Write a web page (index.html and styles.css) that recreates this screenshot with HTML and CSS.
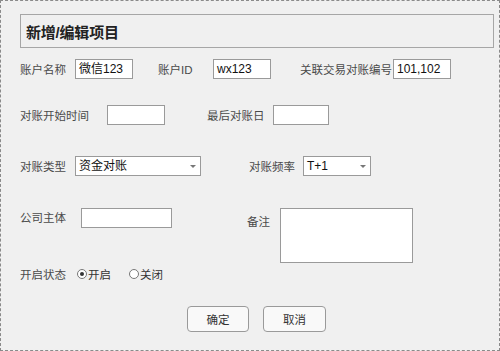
FILE: index.html
```html
<!DOCTYPE html>
<html lang="zh">
<head>
<meta charset="utf-8">
<title>新增/编辑项目</title>
<link rel="stylesheet" href="styles.css">
</head>
<body>
<div class="page">
  <div class="title-box"><h1 class="title">新增/编辑项目</h1></div>

  <div class="row row1">
    <span class="label w55">账户名称</span>
    <div class="input w58">微信123</div>
    <span class="label w55 ml25">账户ID</span>
    <div class="input w58">wx123</div>
    <span class="label w93 ml29">关联交易对账编号</span>
    <div class="input w58">101,102</div>
  </div>

  <div class="row row2">
    <span class="label w87">对账开始时间</span>
    <div class="input w58"></div>
    <span class="label w66 ml42">最后对账日</span>
    <div class="input w56"></div>
  </div>

  <div class="row row3">
    <span class="label w55">对账类型</span>
    <div class="select w126"><span>资金对账</span><i class="caret"></i></div>
    <span class="label w54 ml48">对账频率</span>
    <div class="select w68"><span>T+1</span><i class="caret"></i></div>
  </div>

  <div class="row row4">
    <span class="label w61 lbl-mid">公司主体</span>
    <div class="input w91"></div>
    <span class="label w33 ml75 lbl-top">备注</span>
    <div class="textarea"></div>
  </div>

  <div class="row row5">
    <span class="label w56">开启状态</span>
    <span class="radio checked"></span><span class="opt">开启</span>
    <span class="radio ml-radio2"></span><span class="opt">关闭</span>
  </div>

  <div class="actions">
    <button class="btn btn-ok">确定</button>
    <button class="btn btn-cancel">取消</button>
  </div>
</div>
</body>
</html>
```

FILE: styles.css
```css
* { box-sizing: border-box; }
html, body { margin: 0; padding: 0; }
body {
  width: 500px;
  height: 351px;
  background: #f0f0f0;
  font-family: "Liberation Sans", "Noto Sans CJK SC", sans-serif;
  font-size: 12px;
  color: #333;
}
.page {
  width: 500px;
  height: 351px;
  border: 1px dashed #8a8a8a;
  padding: 13px 0 0 19px;
}
.title-box {
  width: 474px;
  height: 34px;
  border: 1px solid #a6a6a6;
  background: #f0f0f0;
  display: flex;
  align-items: center;
  padding-left: 5px;
}
.title {
  margin: 0;
  font-size: 15px;
  font-weight: bold;
  color: #222;
  letter-spacing: -0.2px;
}
.row { display: flex; align-items: center; }
.row1 { margin-top: 11px; height: 20px; }
.row2 { margin-top: 26px; height: 20px; }
.row3 { margin-top: 31px; height: 20px; }
.row4 { margin-top: 32px; align-items: flex-start; }
.row5 { margin-top: 3px; height: 16px; }

.label { color: #4a4a4a; font-size: 11.5px; white-space: nowrap; }
.w33 { width: 33px; } .w54 { width: 54px; } .w55 { width: 55px; }
.w56 { width: 56px; } .w58 { width: 58px; } .w61 { width: 61px; }
.w66 { width: 66px; } .w68 { width: 68px; } .w87 { width: 87px; }
.w91 { width: 91px; } .w93 { width: 93px; } .w126 { width: 126px; }
.ml25 { margin-left: 25px; } .ml29 { margin-left: 29px; }
.ml42 { margin-left: 42px; } .ml48 { margin-left: 48px; }
.ml75 { margin-left: 75px; }
.lbl-mid { line-height: 20px; }
.lbl-top { line-height: 16px; margin-top: 6px; }

.input {
  height: 20px;
  border: 1px solid #9a9a9a;
  background: #fff;
  color: #111;
  font-size: 12px;
  line-height: 18px;
  padding-left: 3px;
}
.select {
  height: 20px;
  border: 1px solid #9a9a9a;
  background: #fff;
  color: #111;
  font-size: 12px;
  line-height: 18px;
  padding-left: 3px;
  display: flex;
  align-items: center;
  justify-content: space-between;
  padding-right: 4px;
}
.caret {
  width: 0; height: 0;
  border-left: 3px solid transparent;
  border-right: 3px solid transparent;
  border-top: 3px solid #777;
}
.textarea {
  width: 133px;
  height: 55px;
  border: 1px solid #9a9a9a;
  background: #fff;
}
.radio {
  width: 10px; height: 10px;
  border: 1px solid #777;
  border-radius: 50%;
  background: #fff;
  display: inline-flex;
  align-items: center;
  justify-content: center;
  margin-left: 1px;
}
.radio.checked::after {
  content: "";
  width: 4px; height: 4px;
  border-radius: 50%;
  background: #333;
}
.opt { margin-left: 1px; color: #333; font-size: 11.5px; }
.ml-radio2 { margin-left: 18px; }

.actions {
  margin-top: 24px;
  padding-left: 167px;
  display: flex;
  gap: 14px;
}
.btn {
  height: 26px;
  border: 1px solid #9a9a9a;
  border-radius: 4px;
  background: #f9f9f9;
  color: #333;
  font-family: "Liberation Sans", "Noto Sans CJK SC", sans-serif;
  font-size: 11.5px;
  padding: 0;
}
.btn-ok { width: 62px; }
.btn-cancel { width: 63px; }
```
